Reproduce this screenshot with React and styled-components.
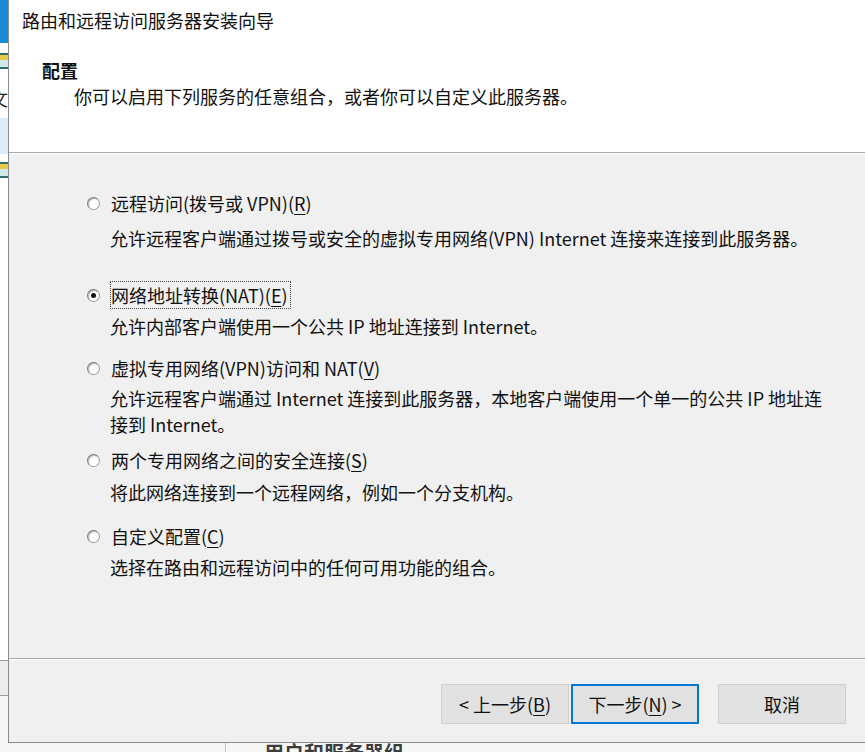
import React from "react";
import styled, { createGlobalStyle } from "styled-components";

const GlobalStyle = createGlobalStyle`
  html, body {
    margin: 0;
    padding: 0;
    background: #f7f7f7;
  }
  body {
    font-family: "Noto Sans CJK SC", "Noto Sans", sans-serif;
    color: #111;
  }
`;

const Desktop = styled.div`
  position: relative;
  width: 865px;
  height: 752px;
  overflow: hidden;
  background: #f7f7f7;
`;

// the server manager window that peeks out behind the wizard
const BackWindow = styled.div`
  position: absolute;
  inset: 0;
  display: grid;
  grid-template-columns: 226px 1fr;
  background: #f7f7f7;
`;

const SideBar = styled.div`
  display: flex;
  flex-direction: column;
  border-right: 1px solid #c4c4c4;
  box-shadow: 1px 0 0 #fdfdfd;
  background: #ffffff;
`;

const SideHeader = styled.div`
  height: 43px;
  flex-shrink: 0;
  background: #1a8ad6;
`;

const SideItem = styled.div`
  height: ${(p) => p.h}px;
  flex-shrink: 0;
  display: flex;
  align-items: center;
  font-size: 18px;
  color: #222;
  background: ${(p) => p.bg || "transparent"};
  border-top: ${(p) => (p.line ? "1px solid #9a9a9a" : "none")};
  border-bottom: ${(p) => (p.line ? "1px solid #9a9a9a" : "none")};
  box-sizing: border-box;
`;

const SideIcon = styled.span`
  display: inline-block;
  width: 14px;
  height: 12px;
  margin-left: -5px;
  border: 2px solid #2d6f6a;
  border-radius: 2px;
  background: linear-gradient(#e8c84a 0 40%, #cfe9ea 40%);
`;

const SideGlyph = styled.span`
  margin-left: -10px;
`;

const SideFill = styled.div`
  height: ${(p) => (p.h ? `${p.h}px` : "auto")};
  flex: ${(p) => (p.h ? "0 0 auto" : "1")};
  background: ${(p) => p.bg || "#f7f7f7"};
`;

const MainArea = styled.div`
  display: flex;
  flex-direction: column;
  justify-content: flex-end;
  padding-left: 38px;
`;

const BackHeading = styled.div`
  font-weight: 700;
  font-size: 20px;
  line-height: 20px;
  color: #3c3c3c;
  margin-bottom: -11px;
`;

const Dialog = styled.div`
  position: absolute;
  left: 8px;
  top: 0;
  width: 857px;
  height: 743px;
  display: flex;
  flex-direction: column;
  border-left: 1px solid #8a8a8a;
  border-bottom: 1px solid #8a8a8a;
  background: #f0f0f0;
  box-sizing: border-box;
  font-size: 18px;
  line-height: 26px;
`;

const Header = styled.div`
  height: 152px;
  flex-shrink: 0;
  background: #ffffff;
  padding-top: 7px;
  box-sizing: border-box;
`;

const Title = styled.div`
  padding-left: 13px;
  color: #111;
`;

const Heading = styled.div`
  margin-top: 24px;
  padding-left: 33px;
  font-weight: 700;
  color: #111;
`;

const SubTitle = styled.div`
  padding-left: 65px;
  color: #111;
`;

const Rule = styled.div`
  height: 1px;
  background: #a8a8a8;
  border-bottom: 1px solid #ffffff;
  flex-shrink: 0;
`;

const Content = styled.div`
  flex: 1;
  padding: 36px 0 0 78px;
  background: #f0f0f0;
`;

const Option = styled.div`
  margin-top: ${(p) => p.gap}px;
`;

const OptionRow = styled.label`
  display: flex;
  align-items: center;
  gap: 11px;
  color: #111;
`;

const Radio = styled.span`
  position: relative;
  width: 13px;
  height: 13px;
  border-radius: 50%;
  box-sizing: border-box;
  border: 1px solid #9c9c9c;
  border-top-color: #7a7a7a;
  border-left-color: #7a7a7a;
  background: radial-gradient(circle at 60% 60%, #ffffff 45%, #d6d6d6 100%);
  box-shadow: inset 1px 1px 0 #bcbcbc;
  flex-shrink: 0;
  &::after {
    content: "";
    position: absolute;
    left: 3px;
    top: 3px;
    width: 5px;
    height: 5px;
    border-radius: 50%;
    background: ${(p) => (p.checked ? "#111" : "transparent")};
  }
`;

const Label = styled.span`
  outline: ${(p) => (p.focused ? "1px dotted #444" : "none")};
  padding-right: 2px;
`;

const Key = styled.span`
  text-decoration: underline;
  text-underline-offset: 3px;
`;

const Desc = styled.div`
  margin-top: ${(p) => p.gap}px;
  padding-left: 23px;
  width: 716px;
  color: #111;
`;

const Footer = styled.div`
  height: 82px;
  flex-shrink: 0;
  display: flex;
  align-items: flex-start;
  justify-content: flex-end;
  padding: 24px 19px 0 0;
  box-sizing: border-box;
`;

const Button = styled.button`
  width: 128px;
  height: 40px;
  margin-left: ${(p) => p.space || 0}px;
  font-family: "Noto Sans CJK SC", "Noto Sans", sans-serif;
  font-size: 18px;
  color: #111;
  background: #e1e1e1;
  border: ${(p) => (p.primary ? "2px solid #0078d7" : "1px solid #cfcfcf")};
  padding: 0;
  box-sizing: border-box;
`;

const options = [
  {
    label: "远程访问(拨号或 VPN)",
    key: "R",
    gap: 0,
    descGap: 9,
    desc: "允许远程客户端通过拨号或安全的虚拟专用网络(VPN) Internet 连接来连接到此服务器。",
  },
  {
    label: "网络地址转换(NAT)",
    key: "E",
    gap: 31,
    descGap: 5,
    checked: true,
    desc: "允许内部客户端使用一个公共 IP 地址连接到 Internet。",
  },
  {
    label: "虚拟专用网络(VPN)访问和 NAT",
    key: "V",
    gap: 16,
    descGap: 4,
    desc: "允许远程客户端通过 Internet 连接到此服务器，本地客户端使用一个单一的公共 IP 地址连接到 Internet。",
  },
  {
    label: "两个专用网络之间的安全连接",
    key: "S",
    gap: 10,
    descGap: 6,
    desc: "将此网络连接到一个远程网络，例如一个分支机构。",
  },
  {
    label: "自定义配置",
    key: "C",
    gap: 18,
    descGap: 5,
    desc: "选择在路由和远程访问中的任何可用功能的组合。",
  },
];

const App = () => {
  return (
    <Desktop>
      <GlobalStyle />
      <BackWindow>
        <SideBar>
          <SideHeader />
          <SideItem h={35}>
            <SideIcon />
          </SideItem>
          <SideItem h={40}>
            <SideGlyph>文</SideGlyph>
          </SideItem>
          <SideItem h={36} bg="#dcecf9" />
          <SideItem h={32}>
            <SideIcon />
          </SideItem>
          <SideFill h={474} bg="#ffffff" />
          <SideItem h={36} bg="#ececec" line />
          <SideFill />
        </SideBar>
        <MainArea>
          <BackHeading>用户和服务器组</BackHeading>
        </MainArea>
      </BackWindow>

      <Dialog>
        <Header>
          <Title>路由和远程访问服务器安装向导</Title>
          <Heading>配置</Heading>
          <SubTitle>你可以启用下列服务的任意组合，或者你可以自定义此服务器。</SubTitle>
        </Header>
        <Rule />
        <Content>
          {options.map((o) => (
            <Option key={o.key} gap={o.gap}>
              <OptionRow>
                <Radio checked={o.checked} />
                <Label focused={o.checked}>
                  {o.label}(<Key>{o.key}</Key>)
                </Label>
              </OptionRow>
              <Desc gap={o.descGap}>{o.desc}</Desc>
            </Option>
          ))}
        </Content>
        <Rule />
        <Footer>
          <Button>
            &lt; 上一步(<Key>B</Key>)
          </Button>
          <Button primary space={2}>
            下一步(<Key>N</Key>) &gt;
          </Button>
          <Button space={19}>取消</Button>
        </Footer>
      </Dialog>
    </Desktop>
  );
};

export default App;
